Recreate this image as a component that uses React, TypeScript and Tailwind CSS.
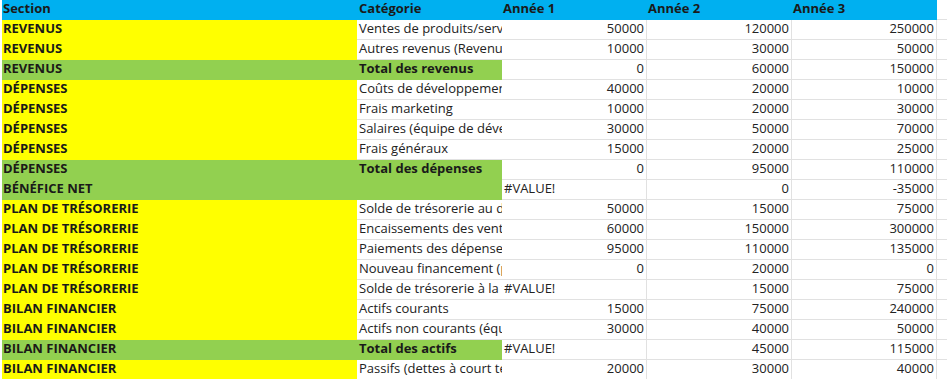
import React from 'react';

type Row = {
  section: string;
  cat: string;
  c: string;
  d: string;
  e: string;
  total?: boolean;
};

const rows: Row[] = [
  { section: 'REVENUS', cat: 'Ventes de produits/services', c: '50000', d: '120000', e: '250000' },
  { section: 'REVENUS', cat: 'Autres revenus (Revenus financiers)', c: '10000', d: '30000', e: '50000' },
  { section: 'REVENUS', cat: 'Total des revenus', c: '0', d: '60000', e: '150000', total: true },
  { section: 'DÉPENSES', cat: 'Coûts de développement', c: '40000', d: '20000', e: '10000' },
  { section: 'DÉPENSES', cat: 'Frais marketing', c: '10000', d: '20000', e: '30000' },
  { section: 'DÉPENSES', cat: 'Salaires (équipe de développement)', c: '30000', d: '50000', e: '70000' },
  { section: 'DÉPENSES', cat: 'Frais généraux', c: '15000', d: '20000', e: '25000' },
  { section: 'DÉPENSES', cat: 'Total des dépenses', c: '0', d: '95000', e: '110000', total: true },
  { section: 'BÉNÉFICE NET', cat: '', c: '#VALUE!', d: '0', e: '-35000', total: true },
  { section: 'PLAN DE TRÉSORERIE', cat: 'Solde de trésorerie au début', c: '50000', d: '15000', e: '75000' },
  { section: 'PLAN DE TRÉSORERIE', cat: 'Encaissements des ventes', c: '60000', d: '150000', e: '300000' },
  { section: 'PLAN DE TRÉSORERIE', cat: 'Paiements des dépenses', c: '95000', d: '110000', e: '135000' },
  { section: 'PLAN DE TRÉSORERIE', cat: 'Nouveau financement (prêt)', c: '0', d: '20000', e: '0' },
  { section: 'PLAN DE TRÉSORERIE', cat: 'Solde de trésorerie à la fin', c: '#VALUE!', d: '15000', e: '75000' },
  { section: 'BILAN FINANCIER', cat: 'Actifs courants', c: '15000', d: '75000', e: '240000' },
  { section: 'BILAN FINANCIER', cat: 'Actifs non courants (équipement)', c: '30000', d: '40000', e: '50000' },
  { section: 'BILAN FINANCIER', cat: 'Total des actifs', c: '#VALUE!', d: '45000', e: '115000', total: true },
  { section: 'BILAN FINANCIER', cat: 'Passifs (dettes à court terme)', c: '20000', d: '30000', e: '40000' },
];

const num = (v: string) => !v.startsWith('#');

const Val = ({ v }: { v: string }) => (
  <div
    className={`h-5 overflow-hidden whitespace-nowrap border-r border-b border-[#e1e1e1] leading-[17px] ${
      num(v) ? 'text-right pr-[2px]' : 'text-left pl-[2px]'
    }`}
  >
    {v}
  </div>
);

export default function App() {
  return (
    <div
      className="w-[947px] h-[379px] overflow-hidden bg-white pl-[2px] text-[13px] text-[#222]"
      style={{ fontFamily: '"Open Sans", "Liberation Sans", sans-serif' }}
    >
      <div className="grid grid-cols-[355px_145px_145px_145px_145px_10px]">
        <div className="h-5 bg-[#00b0f0] font-bold pl-[1px] leading-[17px] text-[#1a1a1a]">Section</div>
        <div className="h-5 bg-[#00b0f0] font-bold pl-[2px] leading-[17px] text-[#1a1a1a]">Catégorie</div>
        <div className="h-5 bg-[#00b0f0] font-bold pl-[1px] leading-[17px] text-[#1a1a1a]">Année 1</div>
        <div className="h-5 bg-[#00b0f0] font-bold pl-[1px] leading-[17px] text-[#1a1a1a]">Année 2</div>
        <div className="h-5 bg-[#00b0f0] font-bold pl-[1px] leading-[17px] text-[#1a1a1a]">Année 3</div>
        <div className="h-5 border-b border-[#e1e1e1]" />
        {rows.map((r, i) => {
          const fill = r.total ? 'bg-[#92d050]' : 'bg-[#ffff00]';
          return (
            <React.Fragment key={i}>
              <div className={`h-5 ${fill} font-bold pl-[1px] leading-[17px] text-[#1a1a1a] whitespace-nowrap overflow-hidden`}>
                {r.section}
              </div>
              <div
                className={`h-5 overflow-hidden whitespace-nowrap pl-[2px] leading-[17px] ${
                  r.total ? 'bg-[#92d050] font-bold text-[#1a1a1a]' : 'border-b border-[#e1e1e1]'
                }`}
              >
                {r.cat}
              </div>
              <Val v={r.c} />
              <Val v={r.d} />
              <Val v={r.e} />
              <div className="h-5 border-b border-[#e1e1e1]" />
            </React.Fragment>
          );
        })}
      </div>
    </div>
  );
}
